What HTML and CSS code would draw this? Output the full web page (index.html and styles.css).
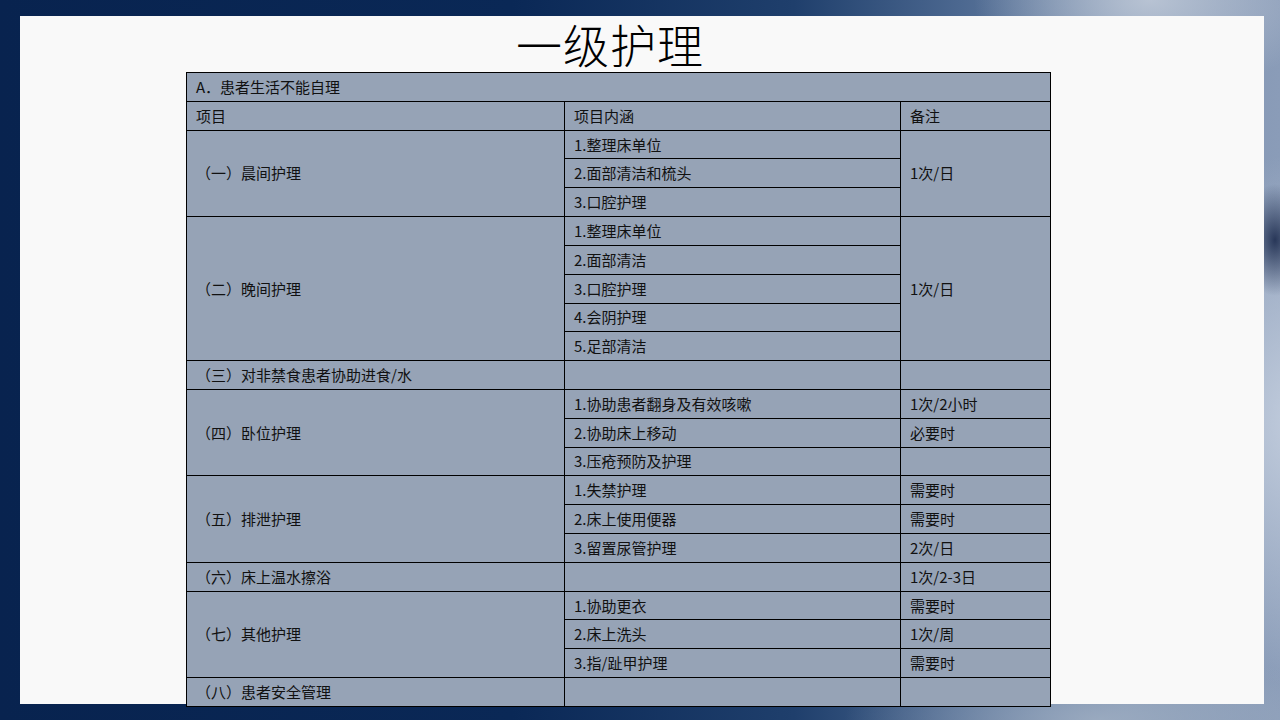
FILE: index.html
```html
<!DOCTYPE html>
<html lang="zh">
<head>
<meta charset="utf-8">
<title>一级护理</title>
<link rel="stylesheet" href="styles.css">
</head>
<body>
<div class="stage">
  <div class="panel">
    <div class="content">
      <h1 class="title">一级护理</h1>
      <table class="care">
        <colgroup>
          <col class="c1"><col class="c2"><col class="c3">
        </colgroup>
        <tr><td colspan="3">A．患者生活不能自理</td></tr>
        <tr><td>项目</td><td>项目内涵</td><td>备注</td></tr>
        <tr><td rowspan="3">（一）晨间护理</td><td>1.整理床单位</td><td rowspan="3">1次/日</td></tr>
        <tr><td>2.面部清洁和梳头</td></tr>
        <tr><td>3.口腔护理</td></tr>
        <tr><td rowspan="5">（二）晚间护理</td><td>1.整理床单位</td><td rowspan="5">1次/日</td></tr>
        <tr><td>2.面部清洁</td></tr>
        <tr><td>3.口腔护理</td></tr>
        <tr><td>4.会阴护理</td></tr>
        <tr><td>5.足部清洁</td></tr>
        <tr><td>（三）对非禁食患者协助进食/水</td><td></td><td></td></tr>
        <tr><td rowspan="3">（四）卧位护理</td><td>1.协助患者翻身及有效咳嗽</td><td>1次/2小时</td></tr>
        <tr><td>2.协助床上移动</td><td>必要时</td></tr>
        <tr><td>3.压疮预防及护理</td><td></td></tr>
        <tr><td rowspan="3">（五）排泄护理</td><td>1.失禁护理</td><td>需要时</td></tr>
        <tr><td>2.床上使用便器</td><td>需要时</td></tr>
        <tr><td>3.留置尿管护理</td><td>2次/日</td></tr>
        <tr><td>（六）床上温水擦浴</td><td></td><td>1次/2-3日</td></tr>
        <tr><td rowspan="3">（七）其他护理</td><td>1.协助更衣</td><td>需要时</td></tr>
        <tr><td>2.床上洗头</td><td>1次/周</td></tr>
        <tr><td>3.指/趾甲护理</td><td>需要时</td></tr>
        <tr><td>（八）患者安全管理</td><td></td><td></td></tr>
      </table>
    </div>
  </div>
</div>
</body>
</html>
```

FILE: styles.css
```css
html, body {
  margin: 0;
  padding: 0;
}

body {
  width: 1280px;
  height: 720px;
  overflow: hidden;
  font-family: "Noto Sans CJK SC", "Noto Sans", sans-serif;
}

.stage {
  width: 1280px;
  height: 720px;
  box-sizing: border-box;
  padding: 16px 16px 16px 20px;
  background:
    radial-gradient(ellipse 40px 70px at 1275px 240px, rgba(20,35,70,0.85), rgba(20,35,70,0) 80%),
    radial-gradient(ellipse 260px 380px at 1300px 420px, rgba(200,210,225,0.9), rgba(200,210,225,0) 70%),
    radial-gradient(ellipse 220px 120px at 1150px 0px, rgba(190,200,215,0.9), rgba(190,200,215,0) 80%),
    radial-gradient(ellipse 320px 90px at 1100px 720px, rgba(160,175,195,0.85), rgba(160,175,195,0) 80%),
    linear-gradient(90deg, #08234f 0%, #0a2856 40%, #1f3f6c 62%, #4c6890 75%, #7d92b0 88%, #8a9cb8 100%);
}

.panel {
  width: 1244px;
  height: 688px;
  background: #f9f9f9;
}

.content {
  width: 864px;
  margin-left: 166px;
}

.title {
  margin: 0;
  height: 56px;
  line-height: 54px;
  font-size: 46px;
  font-weight: 300;
  color: #000;
  text-align: center;
  padding-right: 16px;
  letter-spacing: 1px;
}

.care {
  width: 865px;
  border-collapse: collapse;
  table-layout: fixed;
  background: #96a3b6;
  color: #111;
  font-size: 15px;
}

.care .c1 { width: 378px; }
.care .c2 { width: 336px; }
.care .c3 { width: 150px; }

.care tr {
  height: 28.82px;
}

.care td {
  border: 1px solid #000;
  padding: 0 0 0 9px;
  line-height: 18px;
  vertical-align: middle;
  white-space: nowrap;
}
```
